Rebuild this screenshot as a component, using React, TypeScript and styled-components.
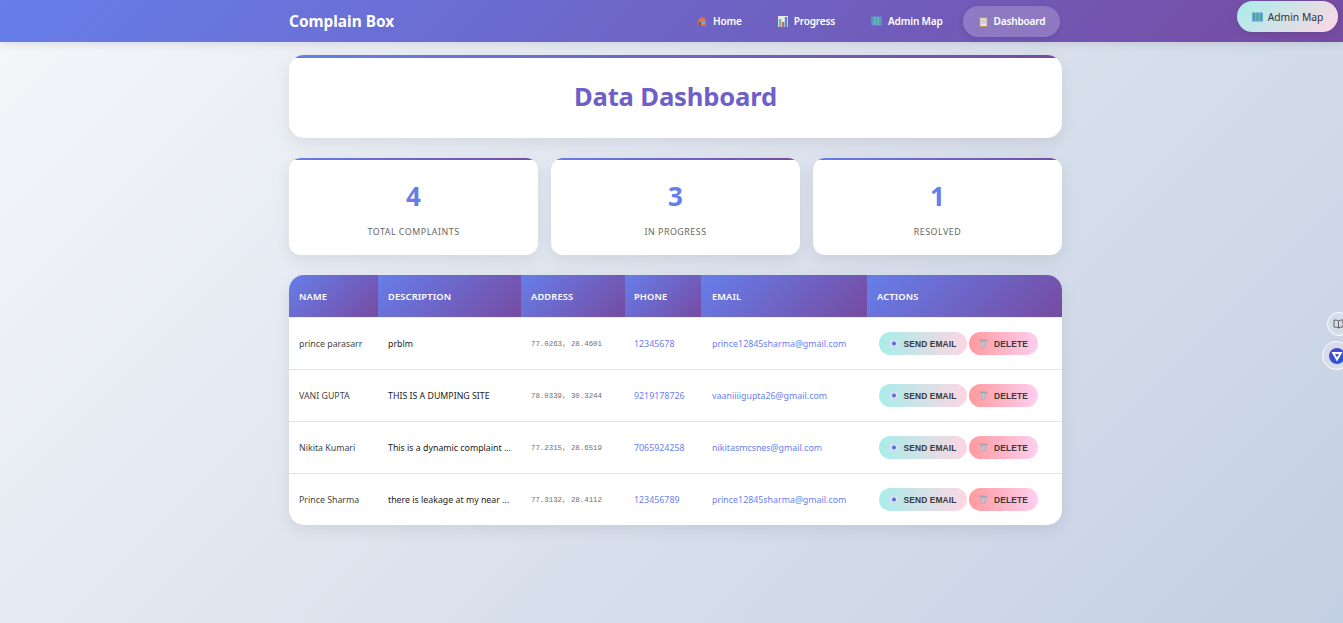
import React from "react";
import styled, { createGlobalStyle } from "styled-components";

const Global = createGlobalStyle`
  html, body { margin: 0; padding: 0; height: 623px; overflow: hidden; }
  body {
    font-family: "Noto Sans", "Open Sans", sans-serif;
    background: linear-gradient(135deg, #f5f7fa 0%, #c3cfe2 100%);
  }
  #root { height: 623px; }
`;

const Page = styled.div`
  position: relative;
  height: 623px;
  overflow: hidden;
`;
const Nav = styled.nav`
  height: 42px;
  display: flex;
  align-items: center;
  padding-left: 289px;
  background: linear-gradient(135deg, #667eea 0%, #764ba2 100%);
  box-shadow: 0 2px 10px rgba(0, 0, 0, 0.1);
`;
const Brand = styled.div`
  font-size: 15.4px;
  font-weight: 700;
  color: #fff;
  width: 392px;
  flex: none;
`;
const NavLinks = styled.div`
  display: flex;
  align-items: center;
  gap: 5.5px;
`;
const NavLink = styled.a<{ $active?: boolean }>`
  display: flex;
  align-items: center;
  gap: 6px;
  height: 31px;
  padding: 0 14.5px 0 16px;
  border-radius: 16px;
  color: #fff;
  font-size: 10.1px;
  letter-spacing: -0.2px;
  font-weight: 600;
  white-space: nowrap;
  background: ${(p) => (p.$active ? "rgba(255,255,255,0.2)" : "transparent")};
  box-shadow: ${(p) => (p.$active ? "0 2px 6px rgba(0,0,0,0.1)" : "none")};
`;
const FloatingMap = styled.a`
  position: absolute;
  top: 1px;
  left: 1237px;
  width: 101px;
  height: 31px;
  display: flex;
  align-items: center;
  justify-content: center;
  gap: 5px;
  border-radius: 16px;
  font-size: 10.3px;
  color: #333;
  background: linear-gradient(135deg, #a8edea 0%, #fed6e3 100%);
  box-shadow: 0 2px 8px rgba(0, 0, 0, 0.1);
`;
const Main = styled.main`
  width: 773px;
  margin-left: 289px;
  padding-top: 13px;
  display: flex;
  flex-direction: column;
  gap: 20px;
`;
const Card = styled.section`
  position: relative;
  overflow: hidden;
  background: #fff;
  box-shadow: 0 5px 16px rgba(0, 0, 0, 0.08);
  &::before {
    content: "";
    position: absolute;
    left: 0;
    right: 0;
    top: 0;
    background: linear-gradient(90deg, #667eea, #764ba2);
  }
`;
const TitleCard = styled(Card)`
  height: 83px;
  border-radius: 15px;
  display: flex;
  align-items: center;
  justify-content: center;
  &::before { height: 3px; }
`;
const Title = styled.h1`
  margin: 0;
  font-size: 25.6px;
  letter-spacing: -0.15px;
  font-weight: 700;
  color: #6f60c8;
`;
const StatRow = styled.div`
  display: grid;
  grid-template-columns: repeat(3, 249px);
  gap: 13px;
`;
const StatCard = styled(Card)`
  height: 97px;
  border-radius: 12px;
  display: flex;
  flex-direction: column;
  align-items: center;
  &::before { height: 2px; }
`;
const StatValue = styled.div`
  margin-top: 20px;
  font-size: 26px;
  line-height: 36px;
  font-weight: 700;
  color: #667eea;
`;
const StatLabel = styled.div`
  margin-top: 11px;
  font-size: 8.9px;
  line-height: 14px;
  letter-spacing: 0.5px;
  color: #666;
  text-transform: uppercase;
`;
const TableCard = styled.section`
  overflow: hidden;
  border-radius: 15px;
  background: #fff;
  box-shadow: 0 5px 16px rgba(0, 0, 0, 0.08);
`;
const Table = styled.table`
  width: 773px;
  table-layout: fixed;
  border-collapse: separate;
  border-spacing: 0;
`;
const Th = styled.th<{ $inset: number }>`
  height: 43px;
  padding: 0 0 0 ${(p) => p.$inset}px;
  box-sizing: border-box;
  text-align: left;
  font-size: 9.3px;
  font-weight: 600;
  letter-spacing: 0.15px;
  color: #fff;
  background: linear-gradient(135deg, #667eea 0%, #764ba2 100%) border-box;
  background-origin: padding-box;
  background-clip: padding-box;
  border-bottom: 1px solid #eef0f6;
  text-transform: uppercase;
`;
const Td = styled.td<{ $dark?: boolean }>`
  height: 52px;
  box-sizing: border-box;
  padding: 0 10px;
  font-size: 8.8px;
  color: ${(p) => (p.$dark ? "#222" : "#444")};
  white-space: nowrap;
  overflow: hidden;
  text-overflow: ellipsis;
  border-bottom: 1px solid #e4e4e8;
  tr:last-child & { border-bottom: none; height: 51px; }
`;
const AddressCell = styled(Td)`
  font-family: "Liberation Mono", monospace;
  font-size: 7.4px;
  color: #707070;
`;
const LinkCell = styled(Td)<{ $inset: number }>`
  padding-left: ${(p) => p.$inset}px;
  font-size: 8.85px;
  color: #6a80f0;
`;
const ActionCell = styled(Td)`
  padding-left: 12px;
  overflow: visible;
`;
const Actions = styled.div`
  display: flex;
  gap: 2px;
`;
const PillButton = styled.button<{ $kind: "mail" | "del" }>`
  height: 23px;
  border: 0;
  border-radius: 12px;
  display: flex;
  align-items: center;
  justify-content: center;
  gap: 6px;
  padding: 0;
  width: ${(p) => (p.$kind === "mail" ? "88px" : "69px")};
  font-family: "Liberation Sans", sans-serif;
  font-size: 8.4px;
  font-weight: 700;
  letter-spacing: 0.12px;
  color: #3a3a3a;
  background: ${(p) =>
    p.$kind === "mail"
      ? "linear-gradient(90deg, #a8edea 0%, #fed6e3 100%)"
      : "linear-gradient(90deg, #ff9a9e 0%, #fecfef 100%)"};
`;
const SideTab = styled.div<{ $top: number; $size: number; $pad: number }>`
  position: absolute;
  right: -8px;
  top: ${(p) => p.$top}px;
  width: ${(p) => p.$size}px;
  height: ${(p) => p.$size}px;
  border-radius: 50%;
  box-sizing: border-box;
  border: 1px solid #fff;
  background: #d6dce9;
  display: flex;
  align-items: center;
  padding-left: ${(p) => p.$pad}px;
`;

const House = () => (
  <svg width="10" height="10" viewBox="0 0 10 10">
    <path d="M5 .4 .3 5.200l1 .6V9.800h7.400V5.800l1-.6z" fill="#dc7550" />
    <rect x="2" y="6" width="2" height="3.800" fill="#7d5a45" />
    <rect x="5" y="5.500" width="3" height="2.500" fill="#5fb6e0" />
    <rect x="7.200" y="1" width="1.200" height="2.500" fill="#c9674a" />
  </svg>
);
const Bars = () => (
  <svg width="10" height="11" viewBox="0 0 10 11">
    <rect x="0" y="0" width="10" height="11" fill="#e6e8ee" />
    <rect x=".8" y="3" width="2.500" height="8" fill="#5ccb8d" />
    <rect x="3.800" y="6" width="2.500" height="5" fill="#e2558c" />
    <rect x="6.800" y="1" width="2.500" height="10" fill="#4b8fd6" />
  </svg>
);
const MapIcon = () => (
  <svg width="11" height="10" viewBox="0 0 11 10">
    <rect x=".2" y=".5" width="10.600" height="9" fill="#4f9bcc" />
    <path d="M1.500 2h2.800v3.500H2.500zM6 3.500h3.500v4.500H6.800z" fill="#4fa67e" />
    <path d="M3.800.5v9M7.200.5v9" stroke="#bcdcec" strokeWidth=".5" />
  </svg>
);
const Clipboard = () => (
  <svg width="9" height="11" viewBox="0 0 9 11">
    <rect x=".3" y="1" width="8.400" height="10" rx=".7" fill="#c08f63" />
    <rect x="1.400" y="2.200" width="6.200" height="7.800" fill="#e9e6ee" />
    <rect x="2.700" y=".2" width="3.600" height="1.800" fill="#8f8b98" />
    <path d="M2.300 4h4.400M2.300 5.600h4.400M2.300 7.200h4.400" stroke="#a9a6b6" strokeWidth=".6" />
  </svg>
);
const MailDot = () => (
  <svg width="8" height="7" viewBox="0 0 8 7">
    <rect x="0" y=".5" width="8" height="6" fill="#e2def4" />
    <circle cx="4" cy="3.500" r="2" fill="#5f6fd0" />
  </svg>
);
const Trash = () => (
  <svg width="9" height="9" viewBox="0 0 9 9">
    <rect x=".5" y=".6" width="8" height="1.500" fill="#a8a2b0" />
    <path d="M1.300 2.200h6.400L7 8.800H2z" fill="#b4aebc" />
    <path d="M3 3v5M4.500 3v5M6 3v5" stroke="#dcd8e0" strokeWidth=".5" />
  </svg>
);
const BookIcon = () => (
  <svg width="11" height="10" viewBox="0 0 11 10" fill="none" stroke="#555" strokeWidth=".9">
    <path d="M5.500 2C4.400 1.200 2.800 1 1 1v7c1.800 0 3.400.2 4.500 1 1.100-.8 2.700-1 4.500-1V1C8.200 1 6.600 1.200 5.500 2zM5.500 2v7" />
  </svg>
);
const VLogo = () => (
  <svg width="16" height="16" viewBox="0 0 16 16" style={{ flex: "none" }}>
    <defs>
      <linearGradient id="vlogo" x1="0" y1="0" x2="1" y2="1">
        <stop offset="0" stopColor="#5a3fd0" />
        <stop offset="1" stopColor="#1560d8" />
      </linearGradient>
    </defs>
    <circle cx="8" cy="8" r="8" fill="url(#vlogo)" />
    <path d="M2.500 4h11L8 13.500zM6 6l2 3.500L10 6z" fill="#fff" fillRule="evenodd" />
  </svg>
);

const rows = [
  ["prince parasarr", "prblm", "77.0263, 28.4601", "12345678", "prince12845sharma@gmail.com"],
  ["VANI GUPTA", "THIS IS A DUMPING SITE", "78.0339, 30.3244", "9219178726", "vaaniiiigupta26@gmail.com"],
  ["Nikita Kumari", "This is a dynamic complaint description", "77.2315, 28.6519", "7065924258", "nikitasmcsnes@gmail.com"],
  ["Prince Sharma", "there is leakage at my near home area", "77.3132, 28.4112", "123456789", "prince12845sharma@gmail.com"],
];
const columns: [string, number, number][] = [
  ["Name", 89, 10],
  ["Description", 143, 10],
  ["Address", 104, 10],
  ["Phone", 76, 9],
  ["Email", 166, 11],
  ["Actions", 195, 10],
];
const stats = [
  ["4", "Total Complaints"],
  ["3", "In Progress"],
  ["1", "Resolved"],
];

export default function App() {
  return (
    <Page>
      <Global />
      <Nav>
        <Brand>Complain Box</Brand>
        <NavLinks>
          <NavLink><House />Home</NavLink>
          <NavLink><Bars />Progress</NavLink>
          <NavLink><MapIcon />Admin Map</NavLink>
          <NavLink $active><Clipboard />Dashboard</NavLink>
        </NavLinks>
      </Nav>
      <FloatingMap><MapIcon />Admin Map</FloatingMap>
      <Main>
        <TitleCard><Title>Data Dashboard</Title></TitleCard>
        <StatRow>
          {stats.map(([value, label]) => (
            <StatCard key={label}>
              <StatValue>{value}</StatValue>
              <StatLabel>{label}</StatLabel>
            </StatCard>
          ))}
        </StatRow>
        <TableCard>
          <Table>
            <colgroup>
              {columns.map(([name, width]) => <col key={name} width={width} />)}
            </colgroup>
            <thead>
              <tr>{columns.map(([name, , inset]) => <Th key={name} $inset={inset}>{name}</Th>)}</tr>
            </thead>
            <tbody>
              {rows.map((r) => (
                <tr key={r[0]}>
                  <Td>{r[0]}</Td>
                  <Td $dark>{r[1]}</Td>
                  <AddressCell>{r[2]}</AddressCell>
                  <LinkCell $inset={9}>{r[3]}</LinkCell>
                  <LinkCell $inset={11}>{r[4]}</LinkCell>
                  <ActionCell>
                    <Actions>
                      <PillButton $kind="mail"><MailDot />SEND EMAIL</PillButton>
                      <PillButton $kind="del"><Trash />DELETE</PillButton>
                    </Actions>
                  </ActionCell>
                </tr>
              ))}
            </tbody>
          </Table>
        </TableCard>
      </Main>
      <SideTab $top={312} $size={24} $pad={5}><BookIcon /></SideTab>
      <SideTab $top={341} $size={29} $pad={6}><VLogo /></SideTab>
    </Page>
  );
}
